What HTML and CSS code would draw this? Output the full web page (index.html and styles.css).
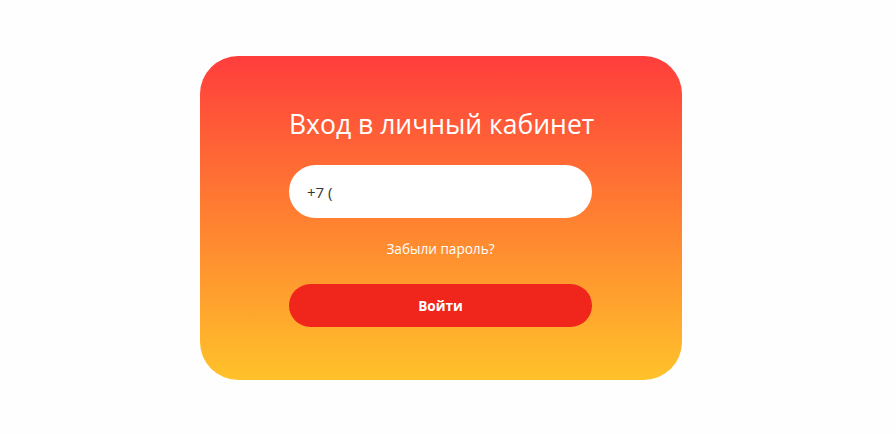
FILE: index.html
```html
<!DOCTYPE html>
<html lang="ru">
<head>
<meta charset="utf-8">
<title>Вход в личный кабинет</title>
<link rel="stylesheet" href="styles.css">
</head>
<body>
<div class="page">
  <form class="card">
    <h1 class="title">Вход в личный кабинет</h1>
    <div class="field"><span class="field-text">+7 (</span></div>
    <a class="forgot" href="#">Забыли пароль?</a>
    <button class="submit" type="button">Войти</button>
  </form>
</div>
</body>
</html>
```
FILE: styles.css
```css
html, body {
  margin: 0;
  padding: 0;
  background: #fefefe;
  font-family: "Open Sans", "Noto Sans", sans-serif;
}
.page {
  padding: 56px 0 0 200px;
}
.card {
  box-sizing: border-box;
  width: 482px;
  height: 324px;
  border-radius: 38px;
  background: linear-gradient(180deg, #ff3d3c 0%, #ff7a32 45%, #ffc22a 100%);
  padding: 48px 90px 0 89px;
  display: flex;
  flex-direction: column;
  align-items: stretch;
}
.title {
  margin: 0;
  font-weight: 400;
  font-size: 26.5px;
  line-height: 40px;
  color: #fff;
  text-align: center;
  white-space: nowrap;
}
.field {
  margin-top: 21px;
  height: 53px;
  border-radius: 27px;
  background: #fff;
  display: flex;
  align-items: center;
  padding-left: 18px;
}
.field-text {
  font-size: 15px;
  color: #333;
}
.forgot {
  margin-top: 20px;
  align-self: center;
  font-size: 13.6px;
  line-height: 22px;
  color: #fff;
  text-decoration: none;
}
.submit {
  margin-top: 24px;
  height: 43px;
  border: 0;
  border-radius: 22px;
  background: #f0261c;
  color: #fff;
  font-family: "Open Sans", "Noto Sans", sans-serif;
  font-weight: 700;
  font-size: 13.6px;
}
```
